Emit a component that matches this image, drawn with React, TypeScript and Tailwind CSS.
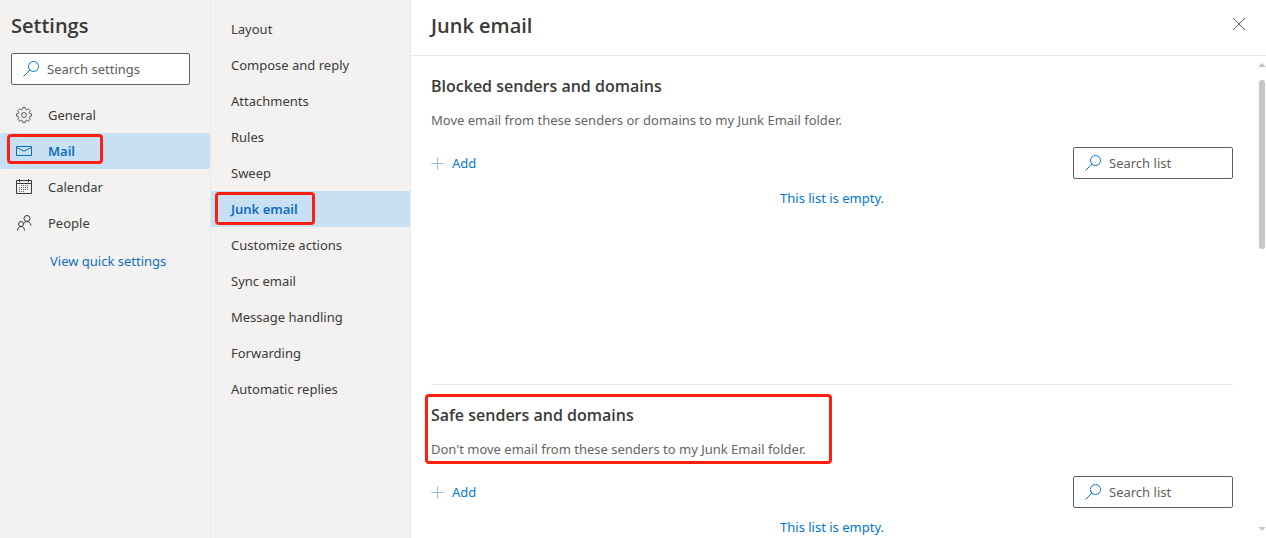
function SearchIcon({ className }: { className?: string }) {
  return (
    <svg className={className} width="16" height="16" viewBox="0 0 16 16" fill="none" stroke="currentColor">
      <circle cx="10.5" cy="5.5" r="5" />
      <path d="M7 9L.5 15.5" />
    </svg>
  );
}

function GearIcon() {
  return (
    <svg width="16" height="16" viewBox="0 0 16 16" fill="none" stroke="currentColor" strokeWidth="0.8" strokeLinejoin="round">
      <path d="M6.9.5h2.2l.4 1.8 1.2.5 1.6-1 1.9 1.9-1 1.6.5 1.2 1.8.4v2.2l-1.8.4-.5 1.2 1 1.6-1.9 1.9-1.6-1-1.2.5-.4 1.8H6.9l-.4-1.8-1.2-.5-1.6 1-1.9-1.9 1-1.6-.5-1.2-1.8-.4V6.9l1.8-.4.5-1.2-1-1.6 1.9-1.9 1.6 1 1.2-.5z" />
      <circle cx="8" cy="8" r="2.5" />
    </svg>
  );
}

function MailIcon() {
  return (
    <svg width="16" height="16" viewBox="0 0 16 16" fill="none" stroke="currentColor">
      <path d="M.5 3.5h15v9H.5zM.5 4.5L8 8.2l7.5-3.7" />
    </svg>
  );
}

function CalendarIcon() {
  return (
    <svg width="16" height="16" viewBox="0 0 16 16" fill="none" stroke="currentColor">
      <path d="M.5 1.5h15v13H.5zM.5 4.5h15M3.500 0v3M12.500 0v3" />
      <path d="M5 6.500h8M3 8.500h10M3 10.500h10M3 12.500h6" strokeDasharray="1 1" strokeWidth="0.8" />
    </svg>
  );
}

function PeopleIcon() {
  return (
    <svg width="16" height="16" viewBox="0 0 16 16" fill="none" stroke="currentColor">
      <circle cx="5" cy="9" r="2.5" />
      <path d="M1.500 15.500c0-2.400 1.400-4 3.500-4s3.500 1.600 3.500 4" />
      <circle cx="11" cy="3.500" r="3" />
      <path d="M7.700 8.600C8.400 7.200 9.600 6.500 11 6.500c2.100 0 3.700 1.400 3.900 4" />
    </svg>
  );
}

const categories = [
  { name: "General", icon: <GearIcon /> },
  { name: "Mail", icon: <MailIcon /> },
  { name: "Calendar", icon: <CalendarIcon /> },
  { name: "People", icon: <PeopleIcon /> },
];

const pages = [
  "Layout",
  "Compose and reply",
  "Attachments",
  "Rules",
  "Sweep",
  "Junk email",
  "Customize actions",
  "Sync email",
  "Message handling",
  "Forwarding",
  "Automatic replies",
];

function SearchBox({ label }: { label: string }) {
  return (
    <label className="flex h-8 w-full items-center gap-2 rounded-xs border border-[#605e5c] bg-white pr-3 pl-[11px]">
      <SearchIcon className="shrink-0 text-[#0078d4]" />
      <input
        type="text"
        aria-label={label}
        placeholder={label}
        className="h-5 w-full min-w-0 bg-transparent outline-none placeholder:text-[#605e5c]"
      />
    </label>
  );
}

function SenderList({ title, text, marked }: { title: string; text: string; marked?: boolean }) {
  return (
    <section className="relative h-[329px] shrink-0 border-t border-[#eaeaea] pt-[18px] first:border-transparent">
      {marked && (
        <div className="pointer-events-none absolute top-[9px] -left-1.5 h-[70px] w-[407px] rounded-sm border-3 border-[#ff1f10]" />
      )}
      <h2 className="font-['Open_Sans',sans-serif] text-base leading-6 font-semibold">{title}</h2>
      <p className="mt-3 text-[#666462]">{text}</p>
      <div className="mt-[17px] flex items-center justify-between">
        <button className="flex items-center gap-2 text-[#0078d4]">
          <svg width="13" height="13" viewBox="0 0 13 13" stroke="#8dbde6" fill="none">
            <path d="M6.5 .5v12M.5 6.5h12" />
          </svg>
          Add
        </button>
        <div className="w-40">
          <SearchBox label="Search list" />
        </div>
      </div>
      <p className="mt-[9px] text-center text-[#0078d4]">This list is empty.</p>
    </section>
  );
}

export default function App() {
  return (
    <div className="flex h-screen overflow-hidden bg-white font-['Noto_Sans',sans-serif] text-[13px] leading-5 text-[#3b3a39]">
      <aside className="w-[211px] shrink-0 border-r border-[#eaeaea] bg-[#f3f2f1] pt-3">
        <h1 className="px-[11px] font-['Open_Sans',sans-serif] text-xl leading-7 font-semibold">Settings</h1>
        <div className="mt-[13px] mr-5 ml-[11px]">
          <SearchBox label="Search settings" />
        </div>
        <nav className="mt-3">
          {categories.map(({ name, icon }) => (
            <a
              key={name}
              href="#"
              className={
                name === "Mail"
                  ? "relative flex h-9 items-center gap-4 rounded-xs bg-[#c7e0f4] px-4 font-semibold text-[#106ebe]"
                  : "flex h-9 items-center gap-4 px-4"
              }
            >
              {name === "Mail" && (
                <span className="absolute top-px left-[7px] h-[30px] w-24 rounded-sm border-3 border-[#ff1f10]" />
              )}
              {icon}
              {name}
            </a>
          ))}
        </nav>
        <a href="#" className="mt-2.5 ml-[50px] inline-block text-[#106ebe]">
          View quick settings
        </a>
      </aside>

      <nav className="w-[200px] shrink-0 border-r border-[#eaeaea] bg-[#f3f2f1] pt-[11px]">
        {pages.map((page) => (
          <a
            key={page}
            href="#"
            className={
              page === "Junk email"
                ? "relative flex h-9 items-center bg-[#c7e0f4] px-5 font-semibold text-[#106ebe]"
                : "flex h-9 items-center px-5"
            }
          >
            {page === "Junk email" && (
              <span className="absolute top-px left-1 h-[33px] w-[100px] rounded-sm border-3 border-[#ff1f10]" />
            )}
            {page}
          </a>
        ))}
      </nav>

      <main className="flex min-w-0 flex-1 flex-col">
        <header className="flex shrink-0 items-start justify-between border-b border-[#eaeaea] pt-3 pr-[21px] pb-[15px] pl-5">
          <h1 className="font-['Open_Sans',sans-serif] text-xl leading-7 font-semibold">Junk email</h1>
          <button aria-label="Close" className="mt-1.5">
            <svg width="12" height="12" viewBox="0 0 12 12" fill="none" stroke="#605e5c">
              <path d="M0 0l12 12M12 0L0 12" />
            </svg>
          </button>
        </header>
        <div className="flex min-h-0 flex-1">
          <div className="-mt-px flex min-w-0 flex-1 flex-col overflow-hidden pr-[25px] pl-5">
            <SenderList
              title="Blocked senders and domains"
              text="Move email from these senders or domains to my Junk Email folder."
            />
            <SenderList
              title="Safe senders and domains"
              text="Don't move email from these senders to my Junk Email folder."
              marked
            />
          </div>
          {/* scrollbar */}
          <div className="flex w-2 shrink-0 flex-col items-center pt-[7px] pb-[7px]">
            <svg width="8" height="4" viewBox="0 0 8 4" fill="#c8c6c4">
              <path d="M4 0l4 4H0z" />
            </svg>
            <div className="mt-[13px] h-[169px] w-1.5 rounded-full bg-[#c8c6c4]" />
            <svg className="mt-auto" width="8" height="4" viewBox="0 0 8 4" fill="#c8cdd2">
              <path d="M0 0h8L4 4z" />
            </svg>
          </div>
        </div>
      </main>
    </div>
  );
}
